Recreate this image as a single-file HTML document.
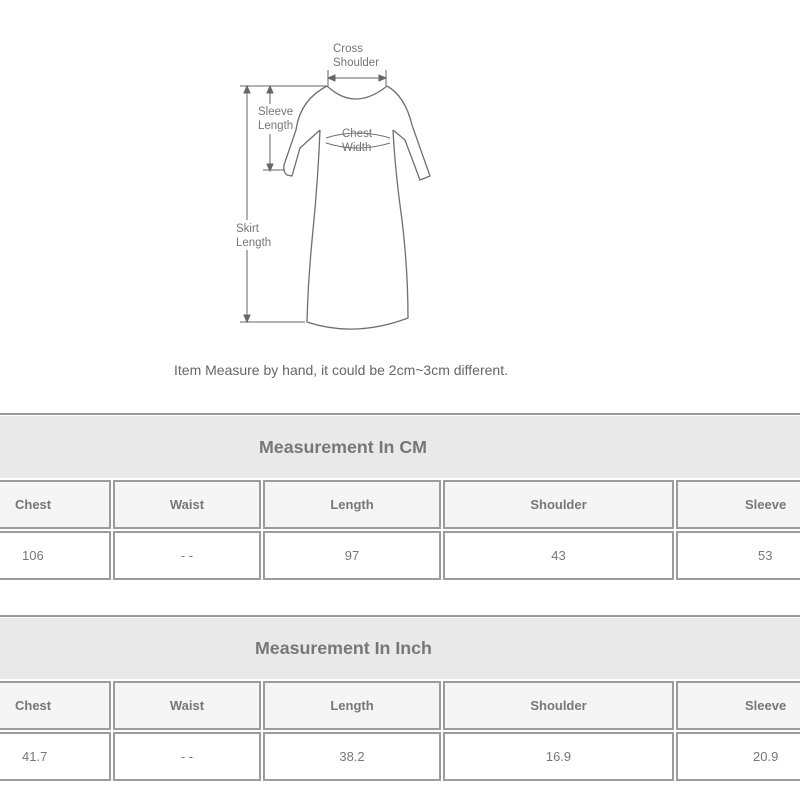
<!DOCTYPE html>
<html><head><meta charset="utf-8"><style>
body{margin:0;width:800px;height:800px;background:#fff;position:relative;overflow:hidden;font-family:"Liberation Sans",Arial,sans-serif;color:#666}
.a{position:absolute;box-sizing:border-box}
.line{background:#9a9a9a;height:2px}
.band{background:#e9e9e9;font-weight:bold;font-size:17.8px;color:#777;display:flex;align-items:center}
.c{border:2px solid #9c9c9c;display:flex;align-items:center;justify-content:center;font-size:13px;color:#777}
.h{background:#f5f5f5;font-weight:bold}
.d{background:#fff}
.cap{font-size:14px;color:#666}
svg text{font-family:"Liberation Sans",sans-serif;font-size:11.5px;fill:#777}
</style></head><body>
<svg class="a" style="left:0;top:0" width="800" height="400" viewBox="0 0 800 400">
<g fill="none" stroke="#6f6f6f" stroke-width="1.3">
<path d="M327,86 Q355,112 387,86"/>
<path d="M327,86 Q300,100 296,130 L284,165 Q283,172 287,175 L292,176 L300,148 L320,130"/>
<path d="M387,86 Q405,96 412,125 L430,176 L420,180 L405,140 L393,130"/>
<path d="M320,130 Q318,180 313,230 Q308,280 307,322 Q355,338 408,318 Q408,270 402,220 Q395,170 393,130"/>
<path d="M326,138 Q357,128 390,138" stroke-width="1"/>
<path d="M326,143 Q357,153 390,143" stroke-width="1"/>
</g>
<g stroke="#666" stroke-width="1" fill="#666">
<line x1="240" y1="86" x2="327" y2="86"/><line x1="240" y1="322" x2="305" y2="322"/>
<line x1="247" y1="88" x2="247" y2="220"/><line x1="247" y1="250" x2="247" y2="320"/>
<path d="M247,86 l-3,7 h6z"/><path d="M247,322 l-3,-7 h6z"/>
<line x1="270" y1="88" x2="270" y2="104"/><line x1="270" y1="134" x2="270" y2="170"/>
<line x1="263" y1="170" x2="285" y2="170"/>
<path d="M270,86 l-3,7 h6z"/><path d="M270,171 l-3,-7 h6z"/>
<line x1="328" y1="70" x2="328" y2="86"/><line x1="386" y1="70" x2="386" y2="86"/>
<line x1="328" y1="78" x2="386" y2="78"/>
<path d="M328,78 l7,-3 v6z"/><path d="M386,78 l-7,-3 v6z"/>
</g>
<text x="333" y="52">Cross</text><text x="333" y="66">Shoulder</text>
<text x="258" y="115">Sleeve</text><text x="258" y="129">Length</text>
<text x="342" y="137">Chest</text><text x="342" y="151">Width</text>
<text x="236" y="232">Skirt</text><text x="236" y="246">Length</text>
</svg>
<div class="a cap" style="left:174px;top:362px">Item Measure by hand, it could be 2cm~3cm different.</div>

<div class="a line" style="left:0;top:413px;width:800px"></div>
<div class="a band" style="left:0;top:416px;width:800px;height:62px;padding-left:259px">Measurement In CM</div>
<div class="a c h" style="left:-4px;top:480px;width:115px;height:49px;justify-content:flex-start;padding-left:17px">Chest</div>
<div class="a c h" style="left:113px;top:480px;width:148px;height:49px">Waist</div>
<div class="a c h" style="left:263px;top:480px;width:178px;height:49px">Length</div>
<div class="a c h" style="left:443px;top:480px;width:231px;height:49px">Shoulder</div>
<div class="a c h" style="left:676px;top:480px;width:180px;height:49px;justify-content:flex-start;padding-left:67px">Sleeve</div>
<div class="a c d" style="left:-4px;top:531px;width:115px;height:49px;justify-content:flex-start;padding-left:24px">106</div>
<div class="a c d" style="left:113px;top:531px;width:148px;height:49px">- -</div>
<div class="a c d" style="left:263px;top:531px;width:178px;height:49px">97</div>
<div class="a c d" style="left:443px;top:531px;width:231px;height:49px">43</div>
<div class="a c d" style="left:676px;top:531px;width:180px;height:49px;justify-content:flex-start;padding-left:80px">53</div>

<div class="a line" style="left:0;top:615px;width:800px"></div>
<div class="a band" style="left:0;top:618px;width:800px;height:61px;padding-left:255px">Measurement In Inch</div>
<div class="a c h" style="left:-4px;top:681px;width:115px;height:49px;justify-content:flex-start;padding-left:17px">Chest</div>
<div class="a c h" style="left:113px;top:681px;width:148px;height:49px">Waist</div>
<div class="a c h" style="left:263px;top:681px;width:178px;height:49px">Length</div>
<div class="a c h" style="left:443px;top:681px;width:231px;height:49px">Shoulder</div>
<div class="a c h" style="left:676px;top:681px;width:180px;height:49px;justify-content:flex-start;padding-left:67px">Sleeve</div>
<div class="a c d" style="left:-4px;top:732px;width:115px;height:49px;justify-content:flex-start;padding-left:24px">41.7</div>
<div class="a c d" style="left:113px;top:732px;width:148px;height:49px">- -</div>
<div class="a c d" style="left:263px;top:732px;width:178px;height:49px">38.2</div>
<div class="a c d" style="left:443px;top:732px;width:231px;height:49px">16.9</div>
<div class="a c d" style="left:676px;top:732px;width:180px;height:49px;justify-content:flex-start;padding-left:75px">20.9</div>
</body></html>
